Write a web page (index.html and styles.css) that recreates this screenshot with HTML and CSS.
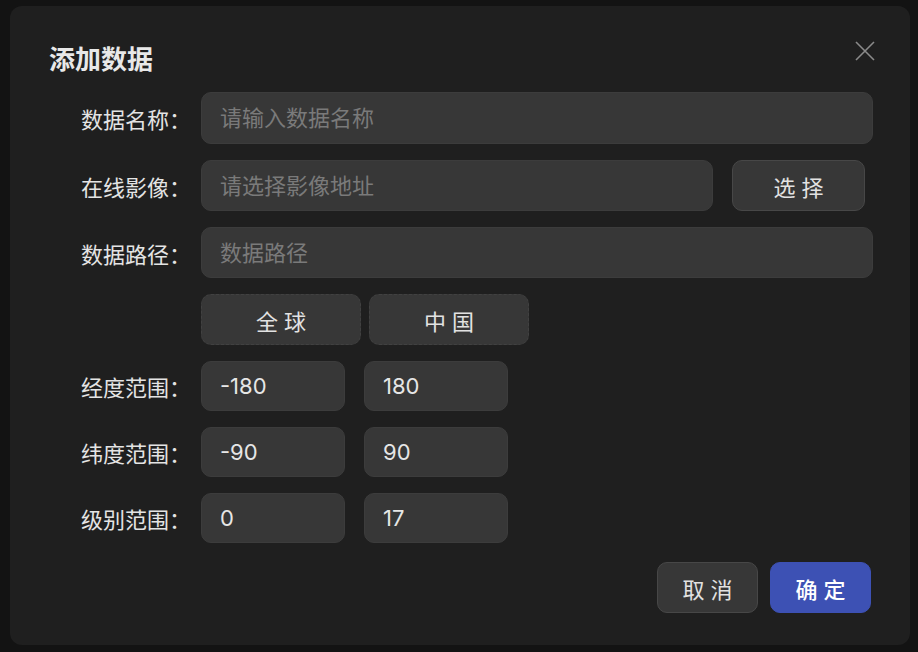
FILE: index.html
```html
<!DOCTYPE html>
<html>
<head>
    <meta charset="utf-8">
    <link rel="stylesheet" href="styles.css">
</head>
<body>
    <div class="dialog">
        <div class="dialog-header">
            <h2>添加数据</h2>
            <button class="close-btn" aria-label="关闭">
                <svg width="20" height="20" viewBox="0 0 20 20">
                    <path d="M1 1 L19 19 M19 1 L1 19" stroke="#8a8a8a" stroke-width="1.6" fill="none"/>
                </svg>
            </button>
        </div>

        <div class="form">
            <label class="form-label first-row">数据名称：</label>
            <div class="form-control first-row">
                <input class="text-input" type="text" placeholder="请输入数据名称">
            </div>

            <label class="form-label">在线影像：</label>
            <div class="form-control">
                <input class="text-input" type="text" placeholder="请选择影像地址">
                <button class="btn btn-select">选择</button>
            </div>

            <label class="form-label">数据路径：</label>
            <div class="form-control">
                <input class="text-input" type="text" placeholder="数据路径">
            </div>

            <span></span>
            <div class="form-control preset-row">
                <button class="btn btn-dashed">全球</button>
                <button class="btn btn-dashed">中国</button>
            </div>

            <label class="form-label small-row">经度范围：</label>
            <div class="form-control range-row">
                <input class="text-input num-input" type="text" value="-180">
                <input class="text-input num-input" type="text" value="180">
            </div>

            <label class="form-label small-row">纬度范围：</label>
            <div class="form-control range-row">
                <input class="text-input num-input" type="text" value="-90">
                <input class="text-input num-input" type="text" value="90">
            </div>

            <label class="form-label small-row">级别范围：</label>
            <div class="form-control range-row">
                <input class="text-input num-input" type="text" value="0">
                <input class="text-input num-input" type="text" value="17">
            </div>
        </div>

        <div class="dialog-footer">
            <button class="btn btn-footer">取消</button>
            <button class="btn btn-footer btn-primary">确定</button>
        </div>
    </div>
</body>
</html>
```

FILE: styles.css
```css
body {
    margin: 0;
    background: #131313;
    font-family: Inter, 'Noto Sans CJK SC', sans-serif;
    color: #e4e4e4;
}

.dialog {
    position: relative;
    width: 900px;
    margin: 6px 0 0 10px;
    padding: 36px 39px 32px 39px;
    box-sizing: border-box;
    background: #1f1f1f;
    border-radius: 12px;
}

.dialog-header h2 {
    margin: 0;
    font-family: 'Noto Sans CJK SC', sans-serif;
    font-size: 26px;
    line-height: 32px;
    font-weight: 700;
    color: #e8e8e8;
}

.close-btn {
    position: absolute;
    top: 35px;
    right: 35px;
    width: 20px;
    height: 20px;
    padding: 0;
    border: none;
    background: none;
    cursor: pointer;
}

.close-btn svg {
    display: block;
}

.form {
    display: grid;
    grid-template-columns: 142px 1fr;
    column-gap: 10px;
    row-gap: 16px;
    margin-top: 18px;
    margin-right: -2px;
}

.form-label {
    display: flex;
    align-items: center;
    justify-content: flex-end;
    height: 51px;
    font-family: 'Noto Sans CJK SC', sans-serif;
    font-size: 22px;
    color: #e4e4e4;
}

.form-label.first-row,
.form-control.first-row {
    height: 52px;
}

.form-label.small-row {
    height: 50px;
}

.form-control {
    display: flex;
    align-items: center;
    height: 51px;
}

.text-input {
    flex: 1;
    height: 100%;
    min-width: 0;
    padding: 0 18px;
    box-sizing: border-box;
    border: 1px solid #3c3c3c;
    border-radius: 10px;
    background: #373737;
    color: #e6e6e6;
    font-family: Inter, 'Noto Sans CJK SC', sans-serif;
    font-size: 22px;
    outline: none;
}

.text-input::placeholder {
    color: #7a7a7a;
    font-family: 'Noto Sans CJK SC', sans-serif;
}

.btn {
    height: 100%;
    padding: 0 0 0 6px;
    box-sizing: border-box;
    border: 1px solid #474747;
    border-radius: 10px;
    background: #373737;
    color: #e2e2e2;
    font-family: 'Noto Sans CJK SC', sans-serif;
    font-size: 22px;
    letter-spacing: 6px;
    cursor: pointer;
}

.btn-select {
    flex: 0 0 133px;
    margin-left: 19px;
    margin-right: 8px;
}

.preset-row {
    gap: 8px;
}

.btn-dashed {
    width: 160px;
    border-style: dashed;
    border-color: #414141;
}

.range-row {
    height: 50px;
    gap: 19px;
}

.num-input {
    flex: 0 0 144px;
}

.dialog-footer {
    display: flex;
    justify-content: flex-end;
    gap: 12px;
    margin-top: 19px;
}

.btn-footer {
    width: 101px;
    height: 51px;
}

.btn-primary {
    background: #3d51b4;
    border-color: #3d51b4;
    color: #ffffff;
    font-weight: 500;
}
```
